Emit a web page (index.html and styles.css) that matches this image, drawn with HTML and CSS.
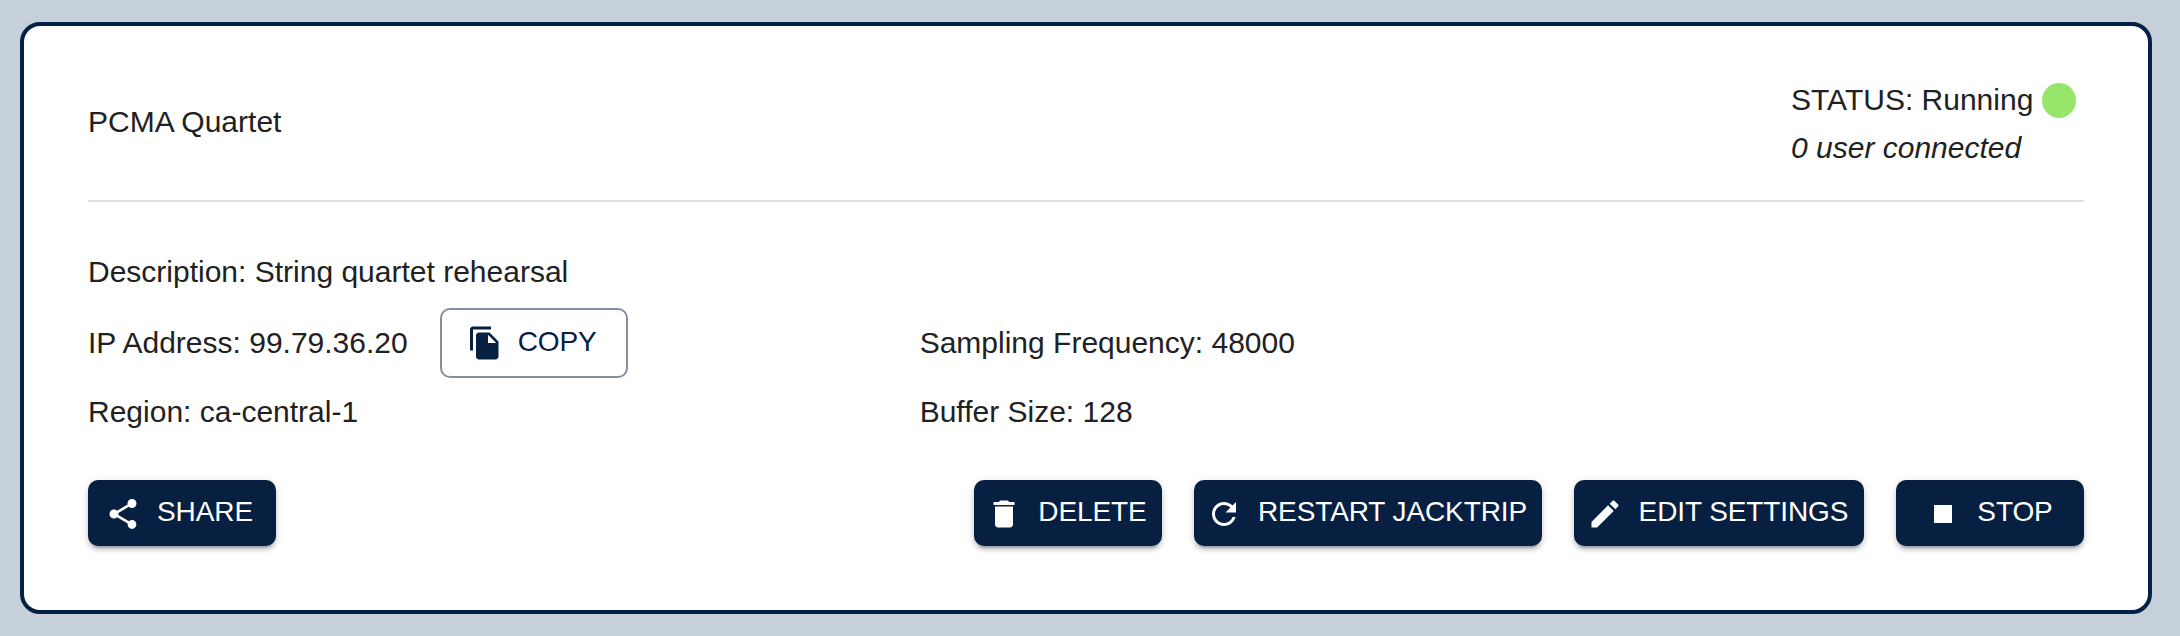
FILE: index.html
```html
<!DOCTYPE html>
<html lang="en">
<head>
<meta charset="utf-8">
<title>PCMA Quartet</title>
<link rel="stylesheet" href="styles.css">
</head>
<body>
<main class="card">
  <header class="card-header">
    <h1 class="name">PCMA Quartet</h1>
    <div class="status">
      <div class="status-line"><span>STATUS: Running</span><span class="dot"></span></div>
      <div class="users">0 user connected</div>
    </div>
  </header>
  <section class="details">
    <div class="row description">Description: String quartet rehearsal</div>
    <div class="row ip">
      <span>IP Address: 99.79.36.20</span>
      <button class="btn btn-outlined"><svg class="icon" viewBox="0 0 24 24"><path d="M16 1H4c-1.100 0-2 .9-2 2v14h2V3h12V1zm-1 4l6 6v10c0 1.100-.9 2-2 2H7.990C6.890 23 6 22.100 6 21l.01-14c0-1.100.89-2 1.990-2h7zm-1 7h5.500L14 6.500V12z"/></svg><span>COPY</span></button>
    </div>
    <div class="row ip">Sampling Frequency: 48000</div>
    <div class="row region">Region: ca-central-1</div>
    <div class="row region">Buffer Size: 128</div>
  </section>
  <footer class="actions">
    <button class="btn share"><svg class="icon" viewBox="0 0 24 24"><path d="M18 16.080c-.76 0-1.440.3-1.960.77L8.910 12.700c.05-.23.09-.46.09-.7s-.04-.47-.09-.7l7.050-4.110c.54.5 1.250.81 2.040.81 1.660 0 3-1.340 3-3s-1.340-3-3-3-3 1.340-3 3c0 .24.04.47.09.7L8.040 9.810C7.500 9.310 6.790 9 6 9c-1.660 0-3 1.340-3 3s1.340 3 3 3c.79 0 1.500-.31 2.040-.81l7.120 4.160c-.05.21-.08.43-.08.65 0 1.610 1.310 2.920 2.920 2.920s2.920-1.310 2.920-2.920-1.310-2.920-2.920-2.920z"/></svg><span>SHARE</span></button>
    <button class="btn"><svg class="icon" viewBox="0 0 24 24"><path d="M6 19c0 1.100.9 2 2 2h8c1.100 0 2-.9 2-2V7H6v12zM19 4h-3.500l-1-1h-5l-1 1H5v2h14V4z"/></svg><span>DELETE</span></button>
    <button class="btn restart"><svg class="icon" viewBox="0 0 24 24"><path d="M17.650 6.350C16.200 4.900 14.210 4 12 4c-4.420 0-7.990 3.580-7.990 8s3.570 8 7.990 8c3.730 0 6.840-2.550 7.730-6h-2.080c-.82 2.330-3.040 4-5.650 4-3.310 0-6-2.690-6-6s2.690-6 6-6c1.660 0 3.140.69 4.220 1.780L13 11h7V4l-2.350 2.350z"/></svg><span>RESTART JACKTRIP</span></button>
    <button class="btn edit"><svg class="icon" viewBox="0 0 24 24"><path d="M3 17.250V21h3.750L17.810 9.940l-3.750-3.750L3 17.250zM20.710 7.040c.39-.39.39-1.020 0-1.410l-2.340-2.340c-.39-.39-1.020-.39-1.410 0l-1.830 1.830 3.750 3.750 1.830-1.830z"/></svg><span>EDIT SETTINGS</span></button>
    <button class="btn stop"><svg class="icon" viewBox="0 0 24 24"><path d="M6 6h12v12H6z"/></svg><span>STOP</span></button>
  </footer>
</main>
</body>
</html>
```
FILE: styles.css
```css
* { box-sizing: border-box; }

body {
  margin: 0;
  padding: 22px 28px 22px 20px;
  height: 636px;
  background: #c6d0da;
  color: #212121;
  font: 30px/48px "Liberation Sans", Arial, sans-serif;
}

.card {
  height: 592px;
  padding: 50px 64px 0;
  border: 4px solid #032144;
  border-radius: 20px;
  background: #fff;
}

.card-header {
  display: flex;
  justify-content: space-between;
  align-items: center;
  height: 126px;
  padding-bottom: 28px;
  border-bottom: 2px solid #e0e0e0;
}

.name {
  margin: 0;
  padding-bottom: 4px;
  font-size: inherit;
  font-weight: 400;
}

.status { width: 293px; }

.status-line {
  display: flex;
  align-items: center;
  justify-content: space-between;
  padding-right: 8px;
}

.dot {
  width: 34px;
  height: 35px;
  border-radius: 50%;
  background: #96e669;
}

.users { font-style: italic; }

.details {
  display: grid;
  grid-template-columns: 5fr 7fr;
  grid-template-rows: 60px 70px 66px;
  padding-top: 46px;
}

.row {
  display: flex;
  align-items: center;
  white-space: nowrap;
}

.description { grid-column: 1 / 3; }
.description, .region { align-items: flex-start; }
.region { padding-top: 10px; }
.ip { gap: 32px; }

.actions {
  display: flex;
  gap: 32px;
  padding-top: 36px;
}

.share { margin-right: auto; }

.btn {
  display: flex;
  flex: none;
  align-items: center;
  justify-content: center;
  width: 188px;
  height: 66px;
  padding: 0 15px 0 16px;
  border: 0;
  border-radius: 10px;
  background: #072042;
  color: #fff;
  font: 28px/48px "Liberation Sans", Arial, sans-serif;
  letter-spacing: -0.1px;
  white-space: nowrap;
  box-shadow: 0 6px 2px -4px rgba(0, 0, 0, .2), 0 4px 4px rgba(0, 0, 0, .14), 0 2px 10px rgba(0, 0, 0, .12);
}

.btn span { padding-bottom: 2px; }

.share { padding: 0 16px 0 14px; }
.restart { width: 348px; }
.edit { width: 290px; }
.stop { padding: 0 14px 0 16px; }

.btn-outlined {
  height: 70px;
  padding: 0 14px;
  border: 2px solid #8390a1;
  background: #fff;
  color: #072042;
  box-shadow: none;
}

.icon {
  flex: none;
  width: 36px;
  height: 36px;
  margin: 2px 16px 0 -4px;
  fill: currentColor;
}

.btn-outlined .icon {
  margin-top: 0;
  margin-right: 15px;
}
```
